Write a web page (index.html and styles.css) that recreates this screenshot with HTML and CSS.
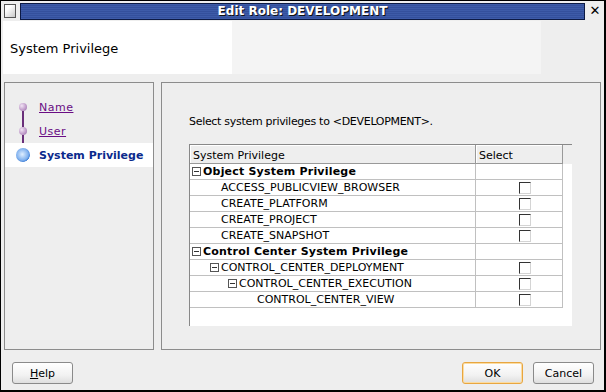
FILE: index.html
```html
<!DOCTYPE html>
<html lang="en">
<head>
    <meta charset="UTF-8">
    <title>Edit Role: DEVELOPMENT</title>
    <link rel="stylesheet" href="styles.css">
</head>
<body>
    <div class="window">
        <div class="titlebar">
            <span class="win-icon"></span>
            <div class="title">Edit Role: DEVELOPMENT</div>
            <span class="close">&#x2715;</span>
        </div>

        <div class="header">
            <div class="header-title">System Privilege</div>
            <div class="header-fill"></div>
        </div>

        <div class="main">
            <div class="steps">
                <div class="step visited">
                    <span class="dot"></span>
                    <a class="step-link">Name</a>
                </div>
                <div class="step visited">
                    <span class="dot"></span>
                    <a class="step-link">User</a>
                </div>
                <div class="step current">
                    <span class="dot"></span>
                    <span class="step-label">System Privilege</span>
                </div>
            </div>

            <div class="content">
                <p class="intro">Select system privileges to &lt;DEVELOPMENT&gt;.</p>
                <div class="grid">
                    <div class="grid-head">
                        <div class="hcell col-name">System Privilege</div>
                        <div class="hcell col-sel">Select</div>
                        <div class="hcell col-pad"></div>
                    </div>
                    <div class="grid-body">
                        <div class="row">
                            <div class="cell col-name lvl0"><span class="toggle"></span><b>Object System Privilege</b></div>
                            <div class="cell col-sel"></div>
                        </div>
                        <div class="row">
                            <div class="cell col-name lvl1">ACCESS_PUBLICVIEW_BROWSER</div>
                            <div class="cell col-sel"><span class="check"></span></div>
                        </div>
                        <div class="row">
                            <div class="cell col-name lvl1">CREATE_PLATFORM</div>
                            <div class="cell col-sel"><span class="check"></span></div>
                        </div>
                        <div class="row">
                            <div class="cell col-name lvl1">CREATE_PROJECT</div>
                            <div class="cell col-sel"><span class="check"></span></div>
                        </div>
                        <div class="row">
                            <div class="cell col-name lvl1">CREATE_SNAPSHOT</div>
                            <div class="cell col-sel"><span class="check"></span></div>
                        </div>
                        <div class="row">
                            <div class="cell col-name lvl0"><span class="toggle"></span><b>Control Center System Privilege</b></div>
                            <div class="cell col-sel"></div>
                        </div>
                        <div class="row">
                            <div class="cell col-name lvl1"><span class="toggle"></span>CONTROL_CENTER_DEPLOYMENT</div>
                            <div class="cell col-sel"><span class="check"></span></div>
                        </div>
                        <div class="row">
                            <div class="cell col-name lvl2"><span class="toggle"></span>CONTROL_CENTER_EXECUTION</div>
                            <div class="cell col-sel"><span class="check"></span></div>
                        </div>
                        <div class="row">
                            <div class="cell col-name lvl3">CONTROL_CENTER_VIEW</div>
                            <div class="cell col-sel"><span class="check"></span></div>
                        </div>
                    </div>
                </div>
            </div>
        </div>

        <div class="footer">
            <button class="btn"><u>H</u>elp</button>
            <div class="spacer"></div>
            <button class="btn btn-default">OK</button>
            <button class="btn">Cancel</button>
        </div>
    </div>
</body>
</html>
```

FILE: styles.css
```css
* {
    box-sizing: border-box;
    margin: 0;
    padding: 0;
}

body {
    font-family: "DejaVu Sans", sans-serif;
    font-size: 11px;
    color: #000;
    background: #eeeeee;
}

.window {
    width: 606px;
    height: 392px;
    border: 1px solid #000;
    border-bottom-width: 2px;
    border-right-width: 2px;
    background: #eeeeee;
    display: flex;
    flex-direction: column;
}

/* title bar */

.titlebar {
    height: 20px;
    display: flex;
    align-items: center;
    padding: 1px 3px 1px 3px;
    gap: 4px;
}

.win-icon {
    width: 12px;
    height: 14px;
    border: 1px solid #555;
    background: linear-gradient(135deg, #fff 30%, #c8c8c8);
}

.title {
    flex: 1;
    height: 17px;
    border: 1px solid #0c1a44;
    background: repeating-linear-gradient(to bottom, #3d5ba8 0, #3d5ba8 1px, #34509c 1px, #34509c 2px);
    color: #fff;
    font-weight: bold;
    font-size: 12px;
    text-align: center;
    line-height: 15px;
    text-shadow: 1px 1px 0 #111;
}

.close {
    width: 12px;
    font-size: 13px;
    font-weight: bold;
    line-height: 14px;
    text-align: center;
}

/* header */

.header {
    height: 53px;
    margin-left: 2px;
    display: flex;
}

.header-title {
    width: 229px;
    background: #fff;
    padding: 20px 0 0 7px;
    font-size: 13px;
}

.header-fill {
    width: 309px;
    background: #f4f4f4;
}

/* main area */

.main {
    display: flex;
    gap: 7px;
    margin: 8px 3px 0 3px;
    height: 268px;
}

.steps {
    width: 150px;
    border: 1px solid #8c8c8c;
    padding-top: 12px;
}

.step {
    position: relative;
    height: 24px;
    display: flex;
    align-items: center;
    padding-left: 34px;
}

.step .dot {
    position: absolute;
    left: 14px;
    top: 8px;
    width: 8px;
    height: 8px;
    border-radius: 50%;
    background: radial-gradient(circle at 35% 35%, #f2e4f4, #b48cc0 70%, #9068a0);
}

.step.visited::after {
    content: "";
    position: absolute;
    left: 17px;
    top: 16px;
    width: 2px;
    height: 16px;
    background: #6a2f7a;
}

.step-link {
    color: #6a0d84;
    text-decoration: underline;
    letter-spacing: 0.5px;
}

.step.current {
    background: #fff;
}

.step.current .dot {
    left: 11px;
    top: 5px;
    width: 14px;
    height: 14px;
    background: radial-gradient(circle at 45% 45%, #dfeeff, #7fb0ee 55%, #3f7fd6 70%, #fff 74%, #fff 82%, #8fb0dc 88%);
}

.step-label {
    color: #0b2a8c;
    font-weight: bold;
}

.content {
    flex: 1;
    border: 1px solid #8c8c8c;
    padding: 32px 0 0 27px;
}

.intro {
    height: 29px;
    letter-spacing: -0.3px;
}

/* privilege grid */

.grid {
    width: 383px;
    height: 182px;
    background: #fff;
    border-top: 1px solid #888;
    border-left: 1px solid #888;
}

.grid-head {
    display: flex;
    height: 19px;
    background: #eeeeee;
}

.hcell {
    height: 19px;
    line-height: 22px;
    padding-left: 3px;
    border-right: 1px solid #999;
    border-bottom: 1px solid #999;
    box-shadow: inset 1px 1px 0 #fff;
}

.hcell.col-pad {
    width: 9px;
    border: none;
    box-shadow: none;
}

.col-name {
    width: 286px;
}

.col-sel {
    width: 87px;
}

.row {
    display: flex;
    height: 16px;
}

.cell {
    height: 16px;
    line-height: 15px;
    border-right: 1px solid #c0c0c0;
    border-bottom: 1px solid #c0c0c0;
    display: flex;
    align-items: center;
    white-space: nowrap;
}

.cell b {
    letter-spacing: 0.2px;
}

.lvl0 { padding-left: 2px; }
.lvl1 { padding-left: 31px; }
.lvl2 { padding-left: 49px; }
.lvl3 { padding-left: 67px; }

.lvl1 .toggle { margin-left: -11px; }
.lvl2 .toggle { margin-left: -11px; }

.toggle {
    position: relative;
    width: 9px;
    height: 9px;
    border: 1px solid #555;
    margin-right: 2px;
    flex-shrink: 0;
}

.toggle::after {
    content: "";
    position: absolute;
    left: 1px;
    top: 3px;
    width: 5px;
    height: 1px;
    background: #333;
}

.col-sel.cell {
    justify-content: center;
}

.check {
    width: 12px;
    height: 12px;
    margin-left: 12px;
    background: #fff;
    border-top: 1px solid #333;
    border-left: 1px solid #333;
    border-right: 1px solid #d4d4d4;
    border-bottom: 1px solid #d4d4d4;
}

/* footer */

.footer {
    display: flex;
    align-items: center;
    padding: 12px 10px 0 11px;
    gap: 10px;
}

.spacer {
    flex: 1;
}

.btn {
    width: 61px;
    height: 22px;
    font-family: "DejaVu Sans", sans-serif;
    font-size: 11px;
    border: 1px solid #8a8a8a;
    border-radius: 3px;
    background: linear-gradient(to bottom, #ffffff, #f2f2f2 60%, #dedede);
    color: #000;
}

.btn-default {
    border-color: #e8a640;
    box-shadow: inset 0 0 0 1px #fbdca2;
}
```
